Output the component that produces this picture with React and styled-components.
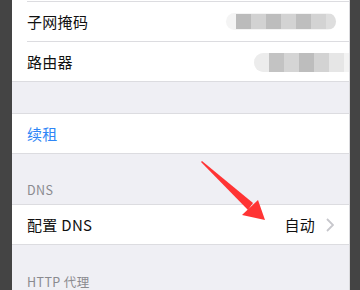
import React from 'react';
import styled, { createGlobalStyle } from 'styled-components';

const Global = createGlobalStyle`
  html, body {
    margin: 0;
    padding: 0;
    background: #444444;
  }
  body {
    font-family: "Noto Sans CJK SC", "Noto Sans", sans-serif;
    -webkit-font-smoothing: antialiased;
  }
`;

const Frame = styled.div`
  position: relative;
  width: 360px;
  height: 290px;
  overflow: hidden;
  display: flex;
  background: #444444;
`;

const Screen = styled.div`
  margin-left: 12px;
  width: 337px;
  height: 290px;
  background: #efeff4;
  border-right: 1px solid #d9d9dc;
  overflow: hidden;
`;

const Group = styled.div`
  background: #ffffff;
  border-top: ${p => (p.noTop ? 'none' : '1px solid #dcdce0')};
  border-bottom: 1px solid #dcdce0;
`;

const Stub = styled.div`
  height: 1px;
`;

const Row = styled.div`
  height: 39px;
  margin-left: 15px;
  padding-right: 15px;
  display: flex;
  align-items: center;
  gap: 11px;
  overflow: hidden;
  border-top: ${p => (p.sep ? '1px solid #dcdce0' : 'none')};
`;

const Label = styled.span`
  flex: 1;
  font-size: 15px;
  color: ${p => (p.blue ? '#2f86f6' : '#111111')};
  letter-spacing: 0.3px;
`;

const Value = styled.span`
  font-size: 15px;
  color: #111111;
  letter-spacing: 0.3px;
`;

const Mosaic = styled.div`
  display: flex;
  height: ${p => p.h}px;
  padding-left: ${p => p.pad}px;
  margin-right: ${p => p.mr}px;
  margin-top: ${p => p.mt || 0}px;
  background: #f4f4f4;
  border-radius: ${p => p.h / 2}px;
  overflow: hidden;
  align-items: center;
`;

const Block = styled.div`
  width: ${p => p.w || 15}px;
  height: ${p => p.h || 15}px;
  background: ${p => p.c};
`;

const Gap = styled.div`
  height: ${p => p.h}px;
`;

const Header = styled.div`
  height: ${p => p.h}px;
  padding-left: 15px;
  display: flex;
  align-items: flex-end;
  font-size: 12.5px;
  color: #8a8a8f;
  letter-spacing: 0.4px;
  box-sizing: border-box;
  padding-bottom: ${p => p.pb}px;
`;

const ArrowLayer = styled.svg`
  position: absolute;
  left: 0;
  top: 0;
  pointer-events: none;
`;

const Chevron = () => (
  <svg width="8" height="14" viewBox="0 0 8 14">
    <polyline points="1,1 7,7 1,13" fill="none" stroke="#c7c7cc" strokeWidth="1.8" />
  </svg>
);

const maskBlocks = ['#bbbbbb', '#d2d2d2', '#bdbdbd', '#d3d3d3', '#bebebe', '#d3d3d3', '#dedede'];
const routerBlocks = ['#ececec', '#c3c3c3', '#d5d5d5', '#bdbdbd', '#d3d3d3', '#e6e6e6', '#f3f3f3'];

export default function App() {
  return (
    <>
      <Global />
      <Frame>
        <Screen>
          <Group noTop>
            <Stub />
            <Row sep>
              <Label>子网掩码</Label>
              <Mosaic h={17} pad={10} mr={-2}>
                {maskBlocks.map((c, i) => (
                  <Block key={i} c={c} w={i === maskBlocks.length - 1 ? 10 : 15} />
                ))}
              </Mosaic>
            </Row>
            <Row sep>
              <Label>路由器</Label>
              <Mosaic h={19} pad={0} mr={-25} mt={2}>
                {routerBlocks.map((c, i) => (
                  <Block key={i} c={c} h={19} />
                ))}
              </Mosaic>
            </Row>
          </Group>
          <Gap h={31} />
          <Group>
            <Row>
              <Label blue>续租</Label>
            </Row>
          </Group>
          <Header h={50} pb={5}>DNS</Header>
          <Group>
            <Row>
              <Label>配置 DNS</Label>
              <Value>自动</Value>
              <Chevron />
            </Row>
          </Group>
          <Header h={46} pb={0}>HTTP 代理</Header>
        </Screen>
        <ArrowLayer width="360" height="290" viewBox="0 0 360 290">
          <polygon points="201,162 202,161 253,203 248,210" fill="#ff3434" />
          <polygon points="265,220 258,200 242,215" fill="#ff3434" />
        </ArrowLayer>
      </Frame>
    </>
  );
}
